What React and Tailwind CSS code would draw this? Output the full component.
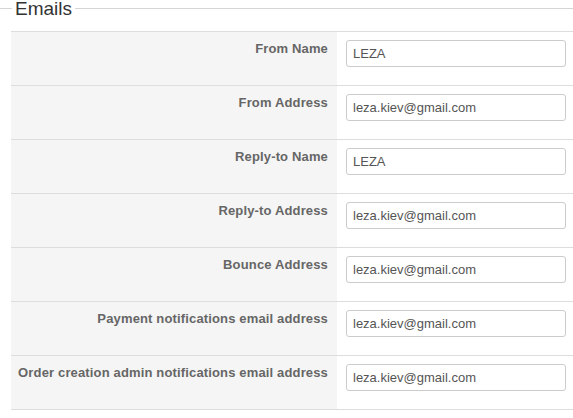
const rows = [
  { label: "From Name", value: "LEZA" },
  { label: "From Address", value: "leza.kiev@gmail.com" },
  { label: "Reply-to Name", value: "LEZA" },
  { label: "Reply-to Address", value: "leza.kiev@gmail.com" },
  { label: "Bounce Address", value: "leza.kiev@gmail.com" },
  { label: "Payment notifications email address", value: "leza.kiev@gmail.com" },
  { label: "Order creation admin notifications email address", value: "leza.kiev@gmail.com" },
];

export default function App() {
  return (
    <div className="w-[573px] h-[418px] overflow-hidden bg-white font-['Liberation_Sans',Arial,sans-serif]">
      {/* legend */}
      <div className="flex mt-[-1px]">
        <div className="w-[12px] h-px bg-[#d5d5d5] mt-[9px]" />
        <div className="px-[3px] text-[19px] leading-[19px] text-[#333]">Emails</div>
        <div className="flex-1 h-px bg-[#d5d5d5] mt-[9px]" />
      </div>

      <div className="ml-[11px] mt-[13px] border-b border-[#dddddd]">
        {rows.map((row) => (
          <div key={row.label} className="grid grid-cols-[326px_1fr] border-t border-[#dddddd] h-[54px]">
            <div className="bg-[#f5f5f5] text-right pr-[9px] pt-[8px] text-[13px] leading-[18px] font-bold tracking-[0.15px] text-[#666]">
              {row.label}
            </div>
            <div className="pl-[9px] pr-[7px] pt-[8px]">
              <input
                readOnly
                value={row.value}
                className="w-full h-[27px] border border-[#cccccc] rounded-[3px] px-[6px] text-[13px] text-[#555] outline-none font-['Liberation_Sans',Arial,sans-serif]"
              />
            </div>
          </div>
        ))}
      </div>
    </div>
  );
}
